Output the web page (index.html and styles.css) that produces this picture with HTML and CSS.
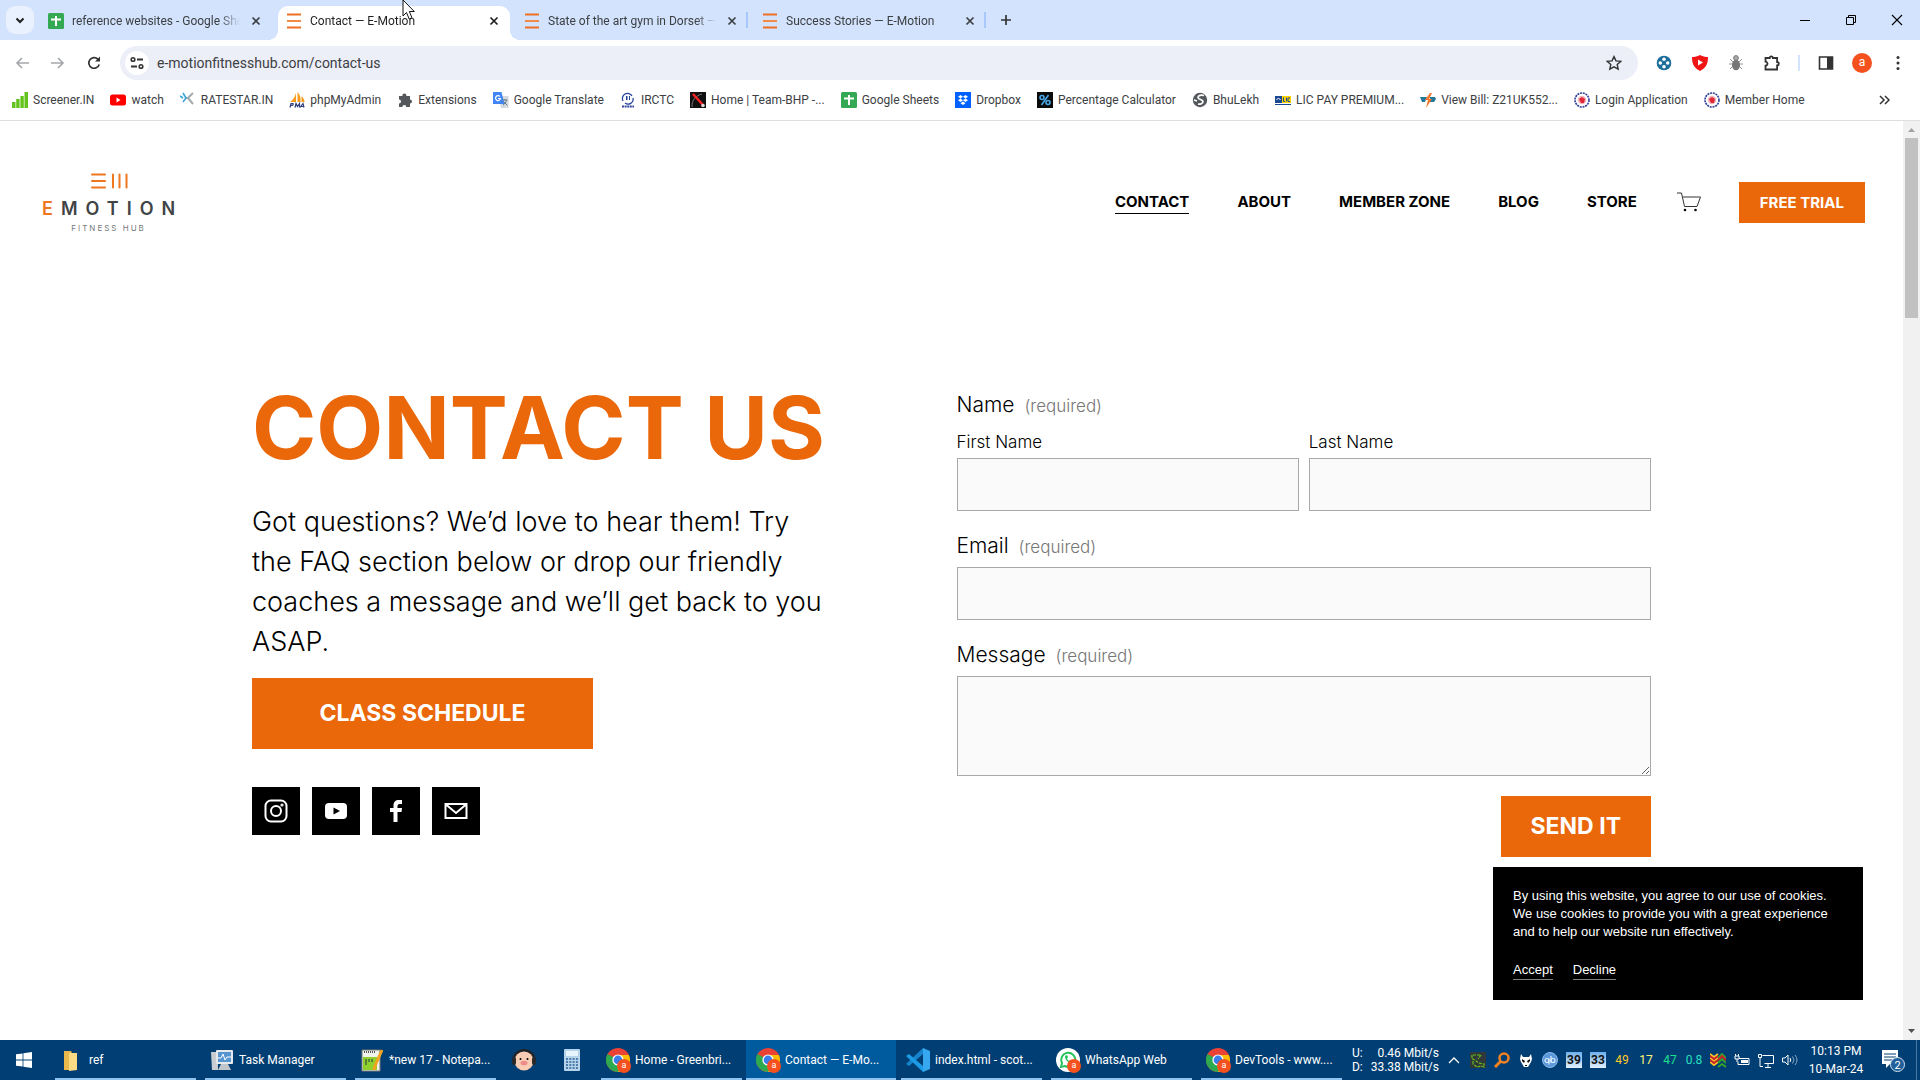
FILE: index.html
```html
<!DOCTYPE html>
<html lang="en">
<head>
<meta charset="utf-8">
<title>Contact — E-Motion</title>
<link rel="stylesheet" href="styles.css">
</head>
<body>
<svg class="defs" aria-hidden="true">
  <symbol id="close" viewBox="0 0 16 16"><path d="M4.5 4.5l7 7M11.500 4.500l-7 7" stroke="currentColor" stroke-width="1.7" fill="none"/></symbol>
  <symbol id="bars" viewBox="0 0 16 16"><path d="M1 1.500h14M1 14.500h14" stroke="#ee7023" stroke-width="2"/><path d="M1 8h14" stroke="#f28a48" stroke-width="2"/></symbol>
  <symbol id="sheets" viewBox="0 0 16 16"><rect width="16" height="16" rx="1.500" fill="#34a853"/><path d="M8 3v10M3 6.500h10" stroke="#fff" stroke-width="2"/></symbol>
  <symbol id="seal" viewBox="0 0 16 16"><circle cx="8" cy="8" r="7" fill="#fff" stroke="#2c3f94" stroke-width="1.600" stroke-dasharray="2 .8"/><circle cx="8" cy="8" r="4.200" fill="#f3b3b8"/><path d="M5 7l3-2 3 2-1 4H7z" fill="#e02838"/></symbol>
  <symbol id="chrome" viewBox="0 0 24 24"><circle cx="12" cy="12" r="12" fill="#ea4335"/><path d="M12 12L1.600 6A12 12 0 0 0 12 24l5.200-9z" fill="#2da94f"/><path d="M12 7h10.900A12 12 0 0 1 12 24l5-9z" fill="#fdbd00"/><circle cx="12" cy="12" r="5.600" fill="#fff"/><circle cx="12" cy="12" r="4.400" fill="#3b7ded"/></symbol>
</svg>

<div class="tabstrip">
  <button class="tab-search" aria-label="Search tabs"><svg viewBox="0 0 16 16"><path d="M4.500 6.500L8 10l3.500-3.500" fill="none" stroke="#1f1f1f" stroke-width="2"/></svg></button>
  <div class="tab"><svg class="fav"><use href="#sheets"/></svg><a class="tab-title" href="#">reference websites - Google Sheets</a><button class="tab-close" aria-label="Close"><svg><use href="#close"/></svg></button></div>
  <div class="tab tab-active"><svg class="fav"><use href="#bars"/></svg><a class="tab-title" href="#">Contact — E-Motion</a><button class="tab-close" aria-label="Close"><svg><use href="#close"/></svg></button></div>
  <div class="tab tab-divided"><svg class="fav"><use href="#bars"/></svg><a class="tab-title" href="#">State of the art gym in Dorset — E-Motion</a><button class="tab-close" aria-label="Close"><svg><use href="#close"/></svg></button></div>
  <div class="tab tab-divided"><svg class="fav"><use href="#bars"/></svg><a class="tab-title" href="#">Success Stories — E-Motion</a><button class="tab-close" aria-label="Close"><svg><use href="#close"/></svg></button></div>
  <button class="new-tab" aria-label="New tab"><svg viewBox="0 0 16 16"><path d="M8 3v10M3 8h10" stroke="#333" stroke-width="1.700"/></svg></button>
  <div class="window-controls">
    <button aria-label="Minimize"><svg viewBox="0 0 12 12"><path d="M1 6.500h10" stroke="#000"/></svg></button>
    <button aria-label="Restore"><svg viewBox="0 0 12 12"><path d="M1.500 3.500h7v7h-7zM3.500 3.500v-2h7v7h-2" fill="none" stroke="#000"/></svg></button>
    <button aria-label="Close window"><svg viewBox="0 0 12 12"><path d="M1 1l10 10M11 1L1 11" stroke="#000" stroke-width="1.100"/></svg></button>
  </div>
</div>

<div class="toolbar">
  <div class="tools tools-left">
    <button aria-label="Back"><svg viewBox="0 0 16 16"><path d="M15 8H3M8 3L3 8l5 5" fill="none" stroke="#a4a6aa" stroke-width="1.600"/></svg></button>
    <button aria-label="Forward"><svg viewBox="0 0 16 16"><path d="M1 8h12M8 3l5 5-5 5" fill="none" stroke="#a4a6aa" stroke-width="1.600"/></svg></button>
    <button aria-label="Reload"><svg viewBox="0 0 16 16"><path d="M13.200 9.500A5.300 5.300 0 1 1 12 4.300l1.500 1.400" fill="none" stroke="#333" stroke-width="1.700"/><path d="M14 1.500v5H9z" fill="#333"/></svg></button>
  </div>
  <div class="address">
    <button class="site-info" aria-label="Site information"><svg viewBox="0 0 16 16"><path d="M8 4.500h6M2 11.500h6" stroke="#333" stroke-width="1.800"/><g fill="none" stroke="#333" stroke-width="1.600"><circle cx="4" cy="4.500" r="1.800"/><circle cx="12" cy="11.500" r="1.800"/></g></svg></button>
    <input type="text" aria-label="Address" value="e-motionfitnesshub.com/contact-us">
    <button class="star" aria-label="Bookmark"><svg viewBox="0 0 16 16"><path d="M8 1.600l2 4.300 4.700.5-3.500 3.200 1 4.600L8 11.900l-4.200 2.300 1-4.600L1.300 6.400l4.700-.5z" fill="none" stroke="#333" stroke-width="1.400"/></svg></button>
  </div>
  <div class="tools">
    <button aria-label="Extension"><svg viewBox="0 0 16 16"><circle cx="8" cy="8" r="7.300" fill="#1c6d9a"/><g fill="#fff"><circle cx="8" cy="4.300" r="1.800"/><circle cx="8" cy="11.700" r="1.800"/><circle cx="4.300" cy="8" r="1.800"/><circle cx="11.700" cy="8" r="1.800"/></g></svg></button>
    <button aria-label="Ad blocker"><svg viewBox="0 0 16 16"><path d="M8 0C5 1.500 3 2 0 2c0 7 2 11 8 14 6-3 8-7 8-14-3 0-5-.5-8-2z" fill="#f01616"/><path d="M6 4.500v6l5-3z" fill="#fff"/></svg></button>
    <button aria-label="Debugger"><svg viewBox="0 0 16 16"><path d="M2 4l3 3M14 4l-3 3M1 9h14M2 14l3-3M14 14l-3-3" stroke="#999"/><circle cx="8" cy="3" r="2.400" fill="#aaa" stroke="#777"/><ellipse cx="8" cy="10" rx="4" ry="5.200" fill="#777"/></svg></button>
    <button aria-label="Extensions"><svg viewBox="0 0 16 16"><path d="M1.500 3h4.200a1.600 1.600 0 0 1 3.200 0h4.200v4a1.700 1.700 0 0 1 0 3.400v4.100H1.500v-3.800a2 2 0 0 0 0-4z" fill="none" stroke="#333" stroke-width="1.800"/></svg></button>
    <span class="tool-divider"></span>
    <button aria-label="Side panel"><svg viewBox="0 0 16 16"><path d="M1.500 2h13v12h-13z" fill="none" stroke="#333" stroke-width="1.600"/><path d="M9 2h5.500v12H9z" fill="#333"/></svg></button>
    <button aria-label="Profile"><span class="avatar">a</span></button>
    <button aria-label="Menu"><svg viewBox="0 0 16 16" fill="#333"><circle cx="8" cy="2.500" r="1.500"/><circle cx="8" cy="8" r="1.500"/><circle cx="8" cy="13.500" r="1.500"/></svg></button>
  </div>
</div>

<nav class="bookmarks" aria-label="Bookmarks">
  <a href="#"><svg viewBox="0 0 16 16" fill="#62c31c"><path d="M0 10h3.500v6H0zM4.200 7h3.400v9H4.200zM8.400 4h3.400v12H8.400zM12.500 0H16v16h-3.500z"/></svg>Screener.IN</a>
  <a href="#"><svg viewBox="0 0 16 16"><rect y="2.500" width="16" height="11" rx="2.500" fill="#f00"/><path d="M6.500 5.500v5l4-2.500z" fill="#fff"/></svg>watch</a>
  <a href="#"><svg viewBox="0 0 16 16"><path d="M5 6h3l5-5M8 6l5 6" stroke="#a5aaae" stroke-width="2" fill="none"/><path d="M3 1l3 5-3 4M0 4l3 2" stroke="#3aa5dc" stroke-width="1.600" fill="none"/></svg>RATESTAR.IN</a>
  <a href="#"><svg viewBox="0 0 16 16"><path d="M7 1v9H1c3-2 5-5 6-9zM8.500 0c3 3 3.500 7 3 10H8.500zM12.500 4c2 2 3 4 3 6h-3z" fill="#f89c1c"/><path d="M1 15.500l1-4h2q1 2-2.500 2M6 15.500l1-4 1.500 3 2-3v4M11 15.500l3-4 1 4M12 14.500h3" fill="none" stroke="#2c3e7c" stroke-width="1.200"/></svg>phpMyAdmin</a>
  <a href="#"><svg viewBox="0 0 16 16"><path d="M2 4h3.500a2 2 0 1 1 3.800 0H13v3.500a2 2 0 1 1 0 4V15H9.300a2 2 0 0 0-4 0H2v-3.500a2 2 0 0 0 0-4z" fill="#54585c"/></svg>Extensions</a>
  <a href="#"><svg viewBox="0 0 16 16"><path d="M6 4h9.500v12H8z" fill="#d5d8dc"/><path d="M0 0h8.500l3 12H0z" fill="#4285f4"/><path d="M7 4.500a2.500 2.500 0 1 0 .5 2H5" fill="none" stroke="#fff" stroke-width="1.200"/><path d="M9.500 8h5M12 7v1M10 13c2-1 3-3 3.500-5M10.500 9.500l4 4" stroke="#607d8b" fill="none"/></svg>Google Translate</a>
  <a href="#"><svg viewBox="0 0 16 16"><path d="M3 9a5 5 0 1 1 9-5M13 6a5 5 0 0 1-8 5" fill="none" stroke="#23409a" stroke-width="1.300"/><path d="M6 4h1.500v4H6zM9 4h1v4H9z" fill="#23409a"/><path d="M2 14.500h12" stroke="#3746a0" stroke-width="2" stroke-dasharray="2 .6"/></svg>IRCTC</a>
  <a href="#"><svg viewBox="0 0 16 16"><path d="M0 0h16v16H0z" fill="#111"/><path d="M2 15C2 8 5 4 12 2" fill="none" stroke="#777"/><path d="M3 2l10 11" stroke="#f22" stroke-width="2.500"/><circle cx="13" cy="13.500" r="1.800" fill="#ddd"/></svg>Home | Team-BHP -...</a>
  <a href="#"><svg><use href="#sheets"/></svg>Google Sheets</a>
  <a href="#"><svg viewBox="0 0 16 16"><path d="M0 0h16v16H0z" fill="#0061ff"/><path d="M5.500 3L8 4.700 5.500 6.400 3 4.700zM10.500 3L13 4.700l-2.500 1.700L8 4.700zM5.500 6.600L8 8.300 5.500 10 3 8.300zM10.500 6.600L13 8.300 10.500 10 8 8.300zM8 9.500l2.500 1.700L8 12.900l-2.500-1.700z" fill="#fff"/></svg>Dropbox</a>
  <a href="#"><svg viewBox="0 0 16 16"><path d="M0 0h16v16H0z" fill="#0a0a0a"/><g fill="none" stroke="#48a7e8" stroke-width="1.600"><circle cx="5" cy="5.500" r="2"/><circle cx="11" cy="10.500" r="2"/><path d="M11.500 3l-7 10"/></g></svg>Percentage Calculator</a>
  <a href="#"><svg viewBox="0 0 16 16"><circle cx="8" cy="8" r="7.200" fill="#54585c"/><path d="M12 3.500c-3-1-6 0-6 2s5 2 5 4-3 3-5 2.500M2 8l3 1" fill="none" stroke="#fff" stroke-width="1.700"/></svg>BhuLekh</a>
  <a href="#"><svg viewBox="0 0 16 16"><path d="M0 4h16v7H0z" fill="#ffd400"/><path d="M0 4h7v7H0zM0 12h16v1H0z" fill="#1b4a92"/><path d="M1.500 8l2-2 2 2" stroke="#fff" fill="none"/><path d="M8.500 5.500v4h1.500M11.500 5.500v4M15 6h-2v3.500h2" stroke="#1b4a92" fill="none"/></svg>LIC PAY PREMIUM...</a>
  <a href="#"><svg viewBox="0 0 16 16"><path d="M0 5h7l-2 5H2zM10 5h5l1 2-2 3h-4z" fill="#21799c"/><path d="M10 1L5 8h3l-2 8 6-9H9l3-6z" fill="#f4762b"/></svg>View Bill: Z21UK552...</a>
  <a href="#"><svg><use href="#seal"/></svg>Login Application</a>
  <a href="#"><svg><use href="#seal"/></svg>Member Home</a>
  <button class="more-bookmarks" aria-label="More bookmarks"><svg viewBox="0 0 12 12"><path d="M2 2l4 4-4 4M7 2l4 4-4 4" fill="none" stroke="#333" stroke-width="1.500"/></svg></button>
</nav>

<div class="viewport">
  <div class="page">
    <header class="site-header">
      <a class="logo" href="#">
        <svg viewBox="0 0 38 16" stroke="#f0761f" stroke-width="2" fill="none" stroke-linecap="round"><path d="M2 1.500h13M2 8h13M2 14.500h13M23 1.500v13M29.500 1.500v13M36.500 1.500v13"/></svg>
        <span class="logo-name"><span class="logo-accent">E</span>MOTION</span>
        <span class="logo-tag">FITNESS HUB</span>
      </a>
      <nav class="site-nav">
        <a class="current" href="#">CONTACT</a><a href="#">ABOUT</a><a href="#">MEMBER ZONE</a><a href="#">BLOG</a><a href="#">STORE</a>
      </nav>
      <a class="cart" href="#" aria-label="Cart"><svg viewBox="0 0 24 20"><path d="M0 1h4.500l3 13.500h12.500L23.500 5H6" fill="none" stroke="#333"/><circle cx="8" cy="18" r="1.300"/><circle cx="18.500" cy="18" r="1.300"/></svg></a>
      <a class="trial" href="#">FREE TRIAL</a>
    </header>

    <main class="contact">
      <section class="intro">
        <h1>CONTACT US</h1>
        <p>Got questions? We’d love to hear them! Try the FAQ section below or drop our friendly coaches a message and we’ll get back to you ASAP.</p>
        <a class="schedule" href="#">CLASS SCHEDULE</a>
        <div class="social">
          <a href="#" aria-label="Instagram"><svg viewBox="0 0 24 24" fill="none" stroke="#fff" stroke-width="2"><rect x="1.500" y="1.500" width="21" height="21" rx="5.500"/><circle cx="12" cy="12" r="5"/><circle cx="18" cy="6" r=".6"/></svg></a>
          <a href="#" aria-label="YouTube"><svg viewBox="0 0 24 24"><rect x="1" y="4" width="22" height="16" rx="4" fill="#fff"/><path d="M9.500 8.500v7l6.500-3.500z"/></svg></a>
          <a href="#" aria-label="Facebook"><svg viewBox="0 0 24 24"><path d="M9.500 23V13H6V9h3.500V6.500C9.500 3 11.500 1 15 1h3v4h-2c-1.800 0-2.500.7-2.500 2.200V9H18l-.5 4h-4v10z" fill="#fff"/></svg></a>
          <a href="#" aria-label="Email"><svg viewBox="0 0 24 24" fill="none" stroke="#fff" stroke-width="2"><path d="M1.500 5h21v14h-21zM2 5.500l10 8.500 10-8.500"/></svg></a>
        </div>
      </section>

      <form class="contact-form">
        <fieldset>
          <legend>Name <span class="required">(required)</span></legend>
          <div class="name-row">
            <div class="field"><label class="sub" for="first">First Name</label><input id="first" type="text"></div>
            <div class="field"><label class="sub" for="last">Last Name</label><input id="last" type="text"></div>
          </div>
        </fieldset>
        <div class="field"><label for="email">Email <span class="required">(required)</span></label><input id="email" type="email"></div>
        <div class="field"><label for="message">Message <span class="required">(required)</span></label><textarea id="message"></textarea></div>
        <button class="send" type="submit">SEND IT</button>
      </form>
    </main>

    <aside class="cookies">
      <p>By using this website, you agree to our use of cookies. We use cookies to provide you with a great experience and to help our website run effectively.</p>
      <div class="cookie-actions"><button>Accept</button><button>Decline</button></div>
    </aside>
  </div>
  <div class="scrollbar">
    <svg viewBox="0 0 17 17"><path d="M5 11l3.500-4 3.500 4z" fill="#a3a3a3"/></svg>
    <div class="thumb"></div>
    <svg viewBox="0 0 17 17"><path d="M5 6l3.500 4L12 6z" fill="#505050"/></svg>
  </div>
</div>

<footer class="taskbar">
  <button class="start" aria-label="Start"><svg viewBox="0 0 16 16" fill="#fff"><path d="M0 2.300L6.600 1.400v6.200H0zM7.400 1.300L16 0v7.600H7.400zM0 8.400h6.600v6.200L0 13.700zM7.400 8.400H16V16l-8.600-1.200z"/></svg></button>
  <button class="task"><svg viewBox="0 0 24 24"><path d="M4 3h7l1 2v17H4z" fill="#e9b94c"/><path d="M9 5h8v17l-8 1z" fill="#fbdc85"/></svg>ref</button>
  <button class="task"><svg viewBox="0 0 24 24"><path d="M1 4h7v18H2z" fill="#c9cdd1"/><rect x="6" y="2" width="17" height="14" rx="1" fill="#e5e9ec"/><path d="M8 4h13v10H8z" fill="#5696d0"/><path d="M8 10h3l2-4 2 6 2-3h4" fill="none" stroke="#fff"/><path d="M11 16h7l3 6H8z" fill="#c1c6cb"/></svg>Task Manager</button>
  <button class="task"><svg viewBox="0 0 24 24"><path d="M2 2h18v21H2z" fill="#eef2ea" stroke="#777"/><path d="M3 9h14v13H3z" fill="#8fd02c"/><path d="M4 4h12" stroke="#555" stroke-dasharray="1 1" stroke-width="2"/><path d="M6 11v6M9 11v3M12 11v3" stroke="#234"/><path d="M22 2l-7 16-1 4" stroke="#f2a421" stroke-width="3" fill="none"/></svg>*new 17 - Notepa...</button>
  <button class="task task-icon" aria-label="Music"><svg viewBox="0 0 24 24"><path d="M2 12C2-1 22-1 22 12" fill="none" stroke="#222" stroke-width="2.500"/><circle cx="12" cy="13" r="9.500" fill="#f9cdb4"/><rect y="9" width="4" height="8" rx="2" fill="#292929"/><rect x="20" y="9" width="4" height="8" rx="2" fill="#292929"/><circle cx="8.500" cy="11" r="1"/><circle cx="15.500" cy="11" r="1"/><ellipse cx="12" cy="15" rx="3.500" ry="2.300" fill="#ef8b8b"/></svg></button>
  <button class="task task-icon" aria-label="Calculator"><svg viewBox="0 0 24 24"><rect x="4" y="1" width="16" height="22" rx="1" fill="#b8d4eb"/><path d="M6 3h12v5H6z" fill="#e8f4fc"/><path d="M6 11h12M6 14h12M6 17h12M6 20h12" stroke="#4a7dac" stroke-width="2" stroke-dasharray="2 1.300"/></svg></button>
  <button class="task"><span class="badged"><svg><use href="#chrome"/></svg><span class="badge">a</span></span>Home - Greenbri...</button>
  <button class="task task-active"><span class="badged"><svg><use href="#chrome"/></svg><span class="badge">a</span></span>Contact — E-Mo...</button>
  <button class="task"><svg viewBox="0 0 24 24"><path d="M17 0v6L3 18l-3-2z" fill="#1685cb"/><path d="M0 8l3-2 14 12v6z" fill="#1b9be5"/><path d="M17 0l7 3v18l-7 3z" fill="#35a8ef"/></svg>index.html - scot...</button>
  <button class="task"><span class="badged"><svg viewBox="0 0 24 24"><circle cx="12" cy="12" r="12" fill="#fff"/><path d="M5 19l1-4a7 7 0 1 1 3 3z" fill="none" stroke="#25c35b" stroke-width="2"/><path d="M9 8c0 4 3 7 7 7l1-2-3-1-1 1-2-2 1-2-1-2z" fill="#25c35b"/></svg><span class="badge">a</span></span>WhatsApp Web</button>
  <button class="task"><span class="badged"><svg><use href="#chrome"/></svg><span class="badge">a</span></span>DevTools - www....</button>

  <div class="tray">
    <div class="net"><span>U:</span><span>0.46 Mbit/s</span><span>D:</span><span>33.38 Mbit/s</span></div>
    <button class="slot" aria-label="Show hidden icons"><svg viewBox="0 0 16 16"><path d="M3 11l5-5 5 5" fill="none" stroke="#fff" stroke-width="1.300"/></svg></button>
    <span class="slot"><svg viewBox="0 0 16 16"><path d="M0 0h16v16H0z" fill="#30383a"/><path d="M2 6V3h9l-3 4M3 12V7l6 4 5 1v3l-3-1-4 1z" fill="none" stroke="#67c01f" stroke-width="1.200" stroke-dasharray="3 1"/></svg></span>
    <span class="slot"><svg viewBox="0 0 16 16"><circle cx="10" cy="6" r="4.500" fill="none" stroke="#f58220" stroke-width="2.500"/><path d="M7 9l-6 6" stroke="#f58220" stroke-width="3"/></svg></span>
    <span class="slot"><svg viewBox="0 0 16 16"><path d="M3 2l2 3h6l2-3 1 5-1 3-3 5H6L3 10 2 7z" fill="#fff"/><path d="M4 7l3 2-1 2-2-2zM12 7L9 9l1 2 2-2zM7 13h2v1H7z" fill="#111"/></svg></span>
    <span class="slot"><svg viewBox="0 0 16 16"><circle cx="8" cy="8" r="7.500" fill="#5b98dc" stroke="#8fbdea"/><g fill="none" stroke="#e5f0fb" stroke-width="1.200"><circle cx="5" cy="8.500" r="2"/><circle cx="11" cy="8.500" r="2"/><path d="M7 6.500v6M9 4v6.500"/></g></svg></span>
    <span class="slot"><span class="temp">39</span></span>
    <span class="slot"><span class="temp">33</span></span>
    <span class="slot reading amber">49</span>
    <span class="slot reading yellow">17</span>
    <span class="slot reading green">47</span>
    <span class="slot reading teal">0.8</span>
    <span class="slot"><svg viewBox="0 0 16 16" fill="none" stroke-width="1.800"><path d="M0 2l4 3 4-3M0 6l4 3 4-3M0 10l4 3 4-3" stroke="#ffc928"/><path d="M0 4l4 3 4-3M0 8l4 3 4-3" stroke="#d2232a"/><path d="M8 6l4-4 4 4M8 11l4-4 4 4M8 15l4-3 4 3" stroke="#39a52b"/><path d="M8 8l4-4 4 4" stroke="#d2232a"/></svg></span>
    <span class="slot"><svg viewBox="0 0 16 16"><path d="M5 6.500h10v6H4v-3" fill="none" stroke="#fff"/><path d="M7 8h7v3H7z" fill="#fff"/><path d="M1 4h4v3H1zM1.500 2v2M4.500 2v2M3 7v3" stroke="#fff" fill="none"/></svg></span>
    <span class="slot"><svg viewBox="0 0 16 16" fill="none" stroke="#fff"><path d="M4.500 3.500h11v8h-9M10 12v3M7 15.500h6M.5 2.500h3v3h-3zM2 6v8.500h3"/></svg></span>
    <span class="slot"><svg viewBox="0 0 16 16" fill="none" stroke="#fff"><path d="M.5 6v4h2.500l3 3V3L3 6zM8 6q1.500 2 0 4"/><path d="M10.500 4.500q3 3.500 0 7M13 3q4 5 0 10" stroke="#8aa8c4"/></svg></span>
    <time class="clock">10:13 PM<br>10-Mar-24</time>
    <button class="notify" aria-label="Notifications"><svg viewBox="0 0 24 24"><path d="M1 2h16v14H9l-4 4v-4H1z" fill="#fff"/><path d="M3 6h12M3 9h12M3 12h8" stroke="#003e73"/><circle cx="16.500" cy="16.500" r="7" fill="#215f9b" stroke="#d5e3f0"/><text x="16.500" y="20.500" text-anchor="middle" font-size="11" fill="#fff">2</text></svg></button>
  </div>
</footer>

<svg class="pointer" viewBox="0 0 14 20" aria-hidden="true"><path d="M1 0v16l3.500-3.500 2.700 6.500 2.800-1.200-2.700-6.300h5z" fill="#fff" stroke="#111"/></svg>
</body>
</html>
```
FILE: styles.css
```css
* { box-sizing: border-box; }

body {
  margin: 0;
  height: 100vh;
  display: flex;
  flex-direction: column;
  overflow: hidden;
  background: #fff;
  color: #3c4043;
  font: 12px/16px Roboto, "Open Sans", sans-serif;
}

button, input, textarea { font: inherit; color: inherit; }
button { margin: 0; padding: 0; border: 0; background: none; }
a { color: inherit; text-decoration: none; }
svg { display: block; flex: none; width: 16px; height: 16px; }
.defs { position: absolute; width: 0; height: 0; }

/* Tab strip */
.tabstrip {
  display: flex;
  flex: none;
  height: 40px;
  padding: 6px 0 0 6px;
  background: #d3e3fd;
}
.tab-search {
  display: grid;
  place-items: center;
  width: 28px;
  height: 28px;
  margin-right: 6px;
  border-radius: 9px;
  background: #e9f1fe;
}
.tab {
  display: flex;
  align-items: center;
  width: 232px;
  height: 34px;
  margin-right: 6px;
  padding: 0 8px 5px;
}
.tab-active {
  position: relative;
  background: #fff;
  border-radius: 10px 10px 0 0;
  color: #1f1f1f;
}
.tab-active::before, .tab-active::after {
  content: "";
  position: absolute;
  bottom: 0;
  width: 10px;
  height: 10px;
}
.tab-active::before { left: -10px; background: radial-gradient(circle at 0 0, transparent 10px, #fff 10px); }
.tab-active::after { right: -10px; background: radial-gradient(circle at 100% 0, transparent 10px, #fff 10px); }
.tab-title {
  flex: 1;
  min-width: 0;
  margin: 0 8px;
  overflow: hidden;
  white-space: nowrap;
  -webkit-mask-image: linear-gradient(90deg, #000 88%, transparent);
  mask-image: linear-gradient(90deg, #000 88%, transparent);
}
.tab-close { width: 16px; height: 16px; }
.tab-divided { background: linear-gradient(#a8c7fa, #a8c7fa) right 6px / 2px 16px no-repeat; }
.new-tab { display: grid; place-items: center; width: 28px; height: 28px; }
.window-controls { display: flex; margin-left: auto; height: 28px; }
.window-controls button { display: grid; place-items: center; width: 46px; }
.window-controls svg { width: 12px; height: 12px; }

/* Toolbar */
.toolbar {
  display: flex;
  flex: none;
  align-items: center;
  height: 46px;
  padding-left: 4px;
  gap: 8px;
}
.tools { display: flex; align-items: center; }
.tools button { display: grid; place-items: center; width: 36px; height: 34px; }
.tool-divider { width: 2px; height: 16px; margin: 0 8px; background: #d3e3fd; }
.avatar {
  width: 20px;
  height: 20px;
  border-radius: 50%;
  background: #f4511e;
  color: #fff;
  line-height: 19px;
}
.tools:last-child { padding-right: 4px; }
.address {
  display: flex;
  flex: 1;
  align-items: center;
  height: 34px;
  padding: 0 16px 0 5px;
  border-radius: 17px;
  background: #eceef8;
}
.site-info { display: grid; place-items: center; width: 24px; height: 24px; border-radius: 50%; background: #fff; }
.address input {
  flex: 1;
  min-width: 0;
  padding: 0 8px;
  border: 0;
  background: none;
  font-size: 14px;
}

/* Bookmarks */
.bookmarks {
  display: flex;
  flex: none;
  align-items: center;
  gap: 16px;
  height: 35px;
  padding: 0 30px 6px 12px;
  border-bottom: 1px solid #dcdee1;
  white-space: nowrap;
}
.bookmarks a { display: flex; align-items: center; gap: 5px; }
.more-bookmarks { margin-left: auto; }
.more-bookmarks svg { width: 12px; height: 12px; }

/* Web page */
.viewport { position: relative; display: flex; flex: 1; min-height: 0; }
.page {
  position: relative;
  flex: 1;
  color: #000;
  font-family: Inter, "Open Sans", sans-serif;
}
.site-header {
  display: flex;
  align-items: center;
  height: 162px;
  padding: 0 38px 0 42px;
}
.logo {
  display: flex;
  flex-direction: column;
  align-items: center;
  margin-right: auto;
  color: #414345;
}
.logo svg { width: 38px; height: 16px; }
.logo-name { margin: 8px -8px 3px 0; font-size: 18px; line-height: 24px; font-weight: 600; letter-spacing: 8px; }
.logo-accent { color: #f0761f; }
.logo-tag { font-size: 8px; line-height: 8px; letter-spacing: 2px; color: #77797b; }
.site-nav { display: flex; gap: 48px; font-size: 15px; line-height: 22px; font-weight: 700; }
.site-nav a { border-bottom: 1px solid transparent; }
.site-nav .current { border-color: #000; }
.cart { margin: 0 38px 0 40px; }
.cart svg { width: 24px; height: 20px; }
.trial {
  padding: 10px 21px;
  background: #ea670a;
  color: #fff;
  font-size: 15px;
  line-height: 21px;
  font-weight: 700;
}

.contact {
  display: grid;
  grid-template-columns: 1fr 1fr;
  gap: 10px;
  padding: 102px 252px 0;
}
h1 { margin: 0 0 31px; color: #ea670a; font-size: 87px; line-height: 86px; font-weight: 700; white-space: nowrap; }
.intro p { margin: 0 0 16px; max-width: 576px; font-size: 27px; line-height: 40px; font-weight: 300; }
.schedule {
  display: block;
  width: 341px;
  padding: 20px 0;
  background: #ea670a;
  color: #fff;
  font-size: 23px;
  line-height: 31px;
  font-weight: 700;
  text-align: center;
}
.social { display: flex; gap: 12px; margin-top: 38px; }
.social a { display: grid; place-items: center; width: 48px; height: 48px; background: #000; }
.social svg { width: 24px; height: 24px; }

.contact-form { display: flex; flex-direction: column; gap: 15px; }
fieldset { min-width: 0; margin: 0; padding: 0; border: 0; }
legend { padding: 0; margin-bottom: 4px; }
legend, .field label { display: block; font-size: 21px; line-height: 40px; font-weight: 300; }
.required { margin-left: 4px; font-size: 17px; color: #777; }
.field .sub { margin-bottom: 4px; font-size: 17px; line-height: 24px; }
.name-row { display: grid; grid-template-columns: 1fr 1fr; gap: 10px; }
.field input, .field textarea {
  display: block;
  width: 100%;
  height: 53px;
  padding: 8px 12px;
  border: 1px solid #a9a9a9;
  border-radius: 0;
  background: #fafafa;
  font-size: 16px;
}
.field textarea { height: 100px; resize: vertical; }
.send {
  align-self: flex-end;
  margin-top: 5px;
  padding: 15px 30px;
  background: #ea670a;
  color: #fff;
  font-size: 23px;
  line-height: 31px;
  font-weight: 700;
}

.cookies {
  position: absolute;
  right: 40px;
  bottom: 40px;
  width: 370px;
  padding: 20px;
  background: #000;
  color: #fff;
  font: 13px/18px "Liberation Sans", Arial, sans-serif;
}
.cookies p { margin: 0 0 20px; }
.cookie-actions { display: flex; gap: 20px; }
.cookie-actions button { border-bottom: 1px solid #808080; }

.scrollbar { display: flex; flex-direction: column; width: 17px; background: #f1f1f1; }
.scrollbar svg { width: 17px; height: 17px; }
.thumb { height: 180px; margin: 0 2px auto; background: #c1c1c1; }

/* Taskbar */
.taskbar { display: flex; flex: none; height: 40px; background: #003e73; color: #fff; white-space: nowrap; }
.start { display: grid; place-items: center; width: 48px; margin-right: 2px; }
.task {
  display: flex;
  align-items: center;
  gap: 5px;
  width: 150px;
  padding: 0 0 0 10px;
  background: linear-gradient(#8fc3f0, #8fc3f0) center bottom / 141px 2px no-repeat;
}
.task svg { width: 24px; height: 24px; }
.task-icon { width: 48px; padding-left: 12px; background: none; }
.task-active { background: linear-gradient(#8fc3f0, #8fc3f0) center bottom / 100% 2px no-repeat #005a9e; }
.badged { position: relative; }
.badge {
  position: absolute;
  right: -1px;
  bottom: -1px;
  width: 14px;
  height: 14px;
  border-radius: 50%;
  background: #f4511e;
  font-size: 9px;
  line-height: 13px;
  text-align: center;
}
.tray { display: flex; align-items: center; margin-left: auto; border-right: 1px solid #4a7aa3; margin-right: 3px; }
.net { display: grid; grid-template-columns: auto auto; column-gap: 8px; margin-right: 3px; line-height: 14px; }
.net span:nth-child(even) { text-align: right; }
.slot { display: grid; place-items: center; width: 24px; height: 24px; }
.temp {
  width: 16px;
  height: 16px;
  background: linear-gradient(#6fb0ea, #e2f0fc);
  color: #111;
  font-weight: 700;
  text-align: center;
}
.amber { color: #ffc928; }
.yellow { color: #fff27a; }
.green { color: #1fe08b; }
.teal { color: #27e0c0; }
.clock { width: 68px; line-height: 18px; text-align: center; }
.notify { display: grid; place-items: center; width: 46px; height: 40px; }
.notify svg { width: 24px; height: 24px; }

.pointer { position: absolute; left: 402px; top: 0; width: 14px; height: 20px; }
```
